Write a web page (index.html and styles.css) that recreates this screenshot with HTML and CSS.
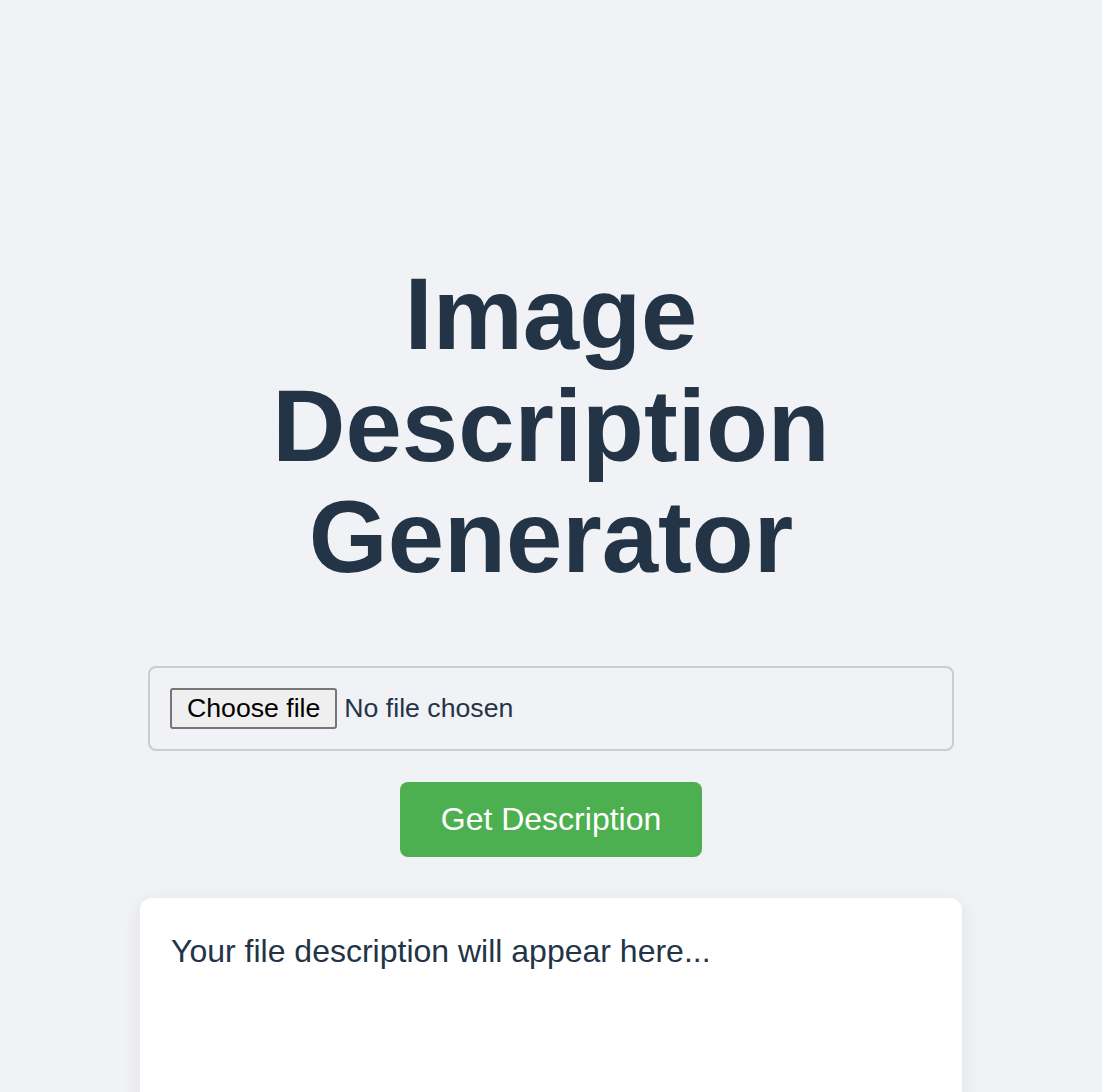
FILE: index.html
```html
<!DOCTYPE html>
<html lang="en">
<head>
<meta charset="utf-8">
<title>Image Description Generator</title>
<link rel="stylesheet" href="styles.css">
</head>
<body>
<main class="container">
  <h1 class="title">Image Description Generator</h1>
  <label class="upload">
    <input class="file-input" type="file" accept="image/*">
    <span class="file-button">Choose file</span>
    <span class="file-name">No file chosen</span>
  </label>
  <button class="submit" type="button">Get Description</button>
  <section class="result">
    <p class="result-text">Your file description will appear here...</p>
  </section>
</main>
</body>
</html>
```
FILE: styles.css
```css
html, body {
  margin: 0;
  padding: 0;
}
body {
  background: #f0f2f5;
  font-family: "Liberation Sans", Arial, sans-serif;
  color: #243447;
}
.container {
  width: 822px;
  margin: 0 auto;
  padding-top: 258px;
  display: flex;
  flex-direction: column;
  align-items: center;
}
.title {
  margin: 0 0 73px;
  width: 600px;
  text-align: center;
  font-size: 101.33px;
  line-height: 111.5px;
  font-weight: 700;
  color: #243447;
}
.upload {
  box-sizing: border-box;
  width: 806px;
  padding: 20px;
  border: 2px solid #cccccc;
  border-radius: 8px;
  display: flex;
  align-items: center;
  font-size: 26.67px;
}
.file-input {
  display: none;
}
.file-button {
  box-sizing: border-box;
  height: 41px;
  display: flex;
  align-items: center;
  color: #000;
  background: #efefef;
  border: 2px solid #767676;
  border-radius: 3px;
  padding: 0 15px;
  margin-right: 7px;
  line-height: 1;
}
.file-name {
  color: #243447;
}
.submit {
  margin-top: 31px;
  background: #4caf50;
  color: #ffffff;
  border: none;
  border-radius: 8px;
  font-family: "Liberation Sans", Arial, sans-serif;
  font-size: 32px;
  padding: 19px 40px;
  width: 302px;
  height: 75px;
}
.result {
  box-sizing: border-box;
  width: 822px;
  min-height: 400px;
  margin-top: 41px;
  background: #ffffff;
  border-radius: 12px;
  box-shadow: 0 5px 20px rgba(0, 0, 0, 0.08);
  padding: 35px 31px;
}
.result-text {
  margin: 0;
  font-size: 32px;
  color: #243447;
}
```
